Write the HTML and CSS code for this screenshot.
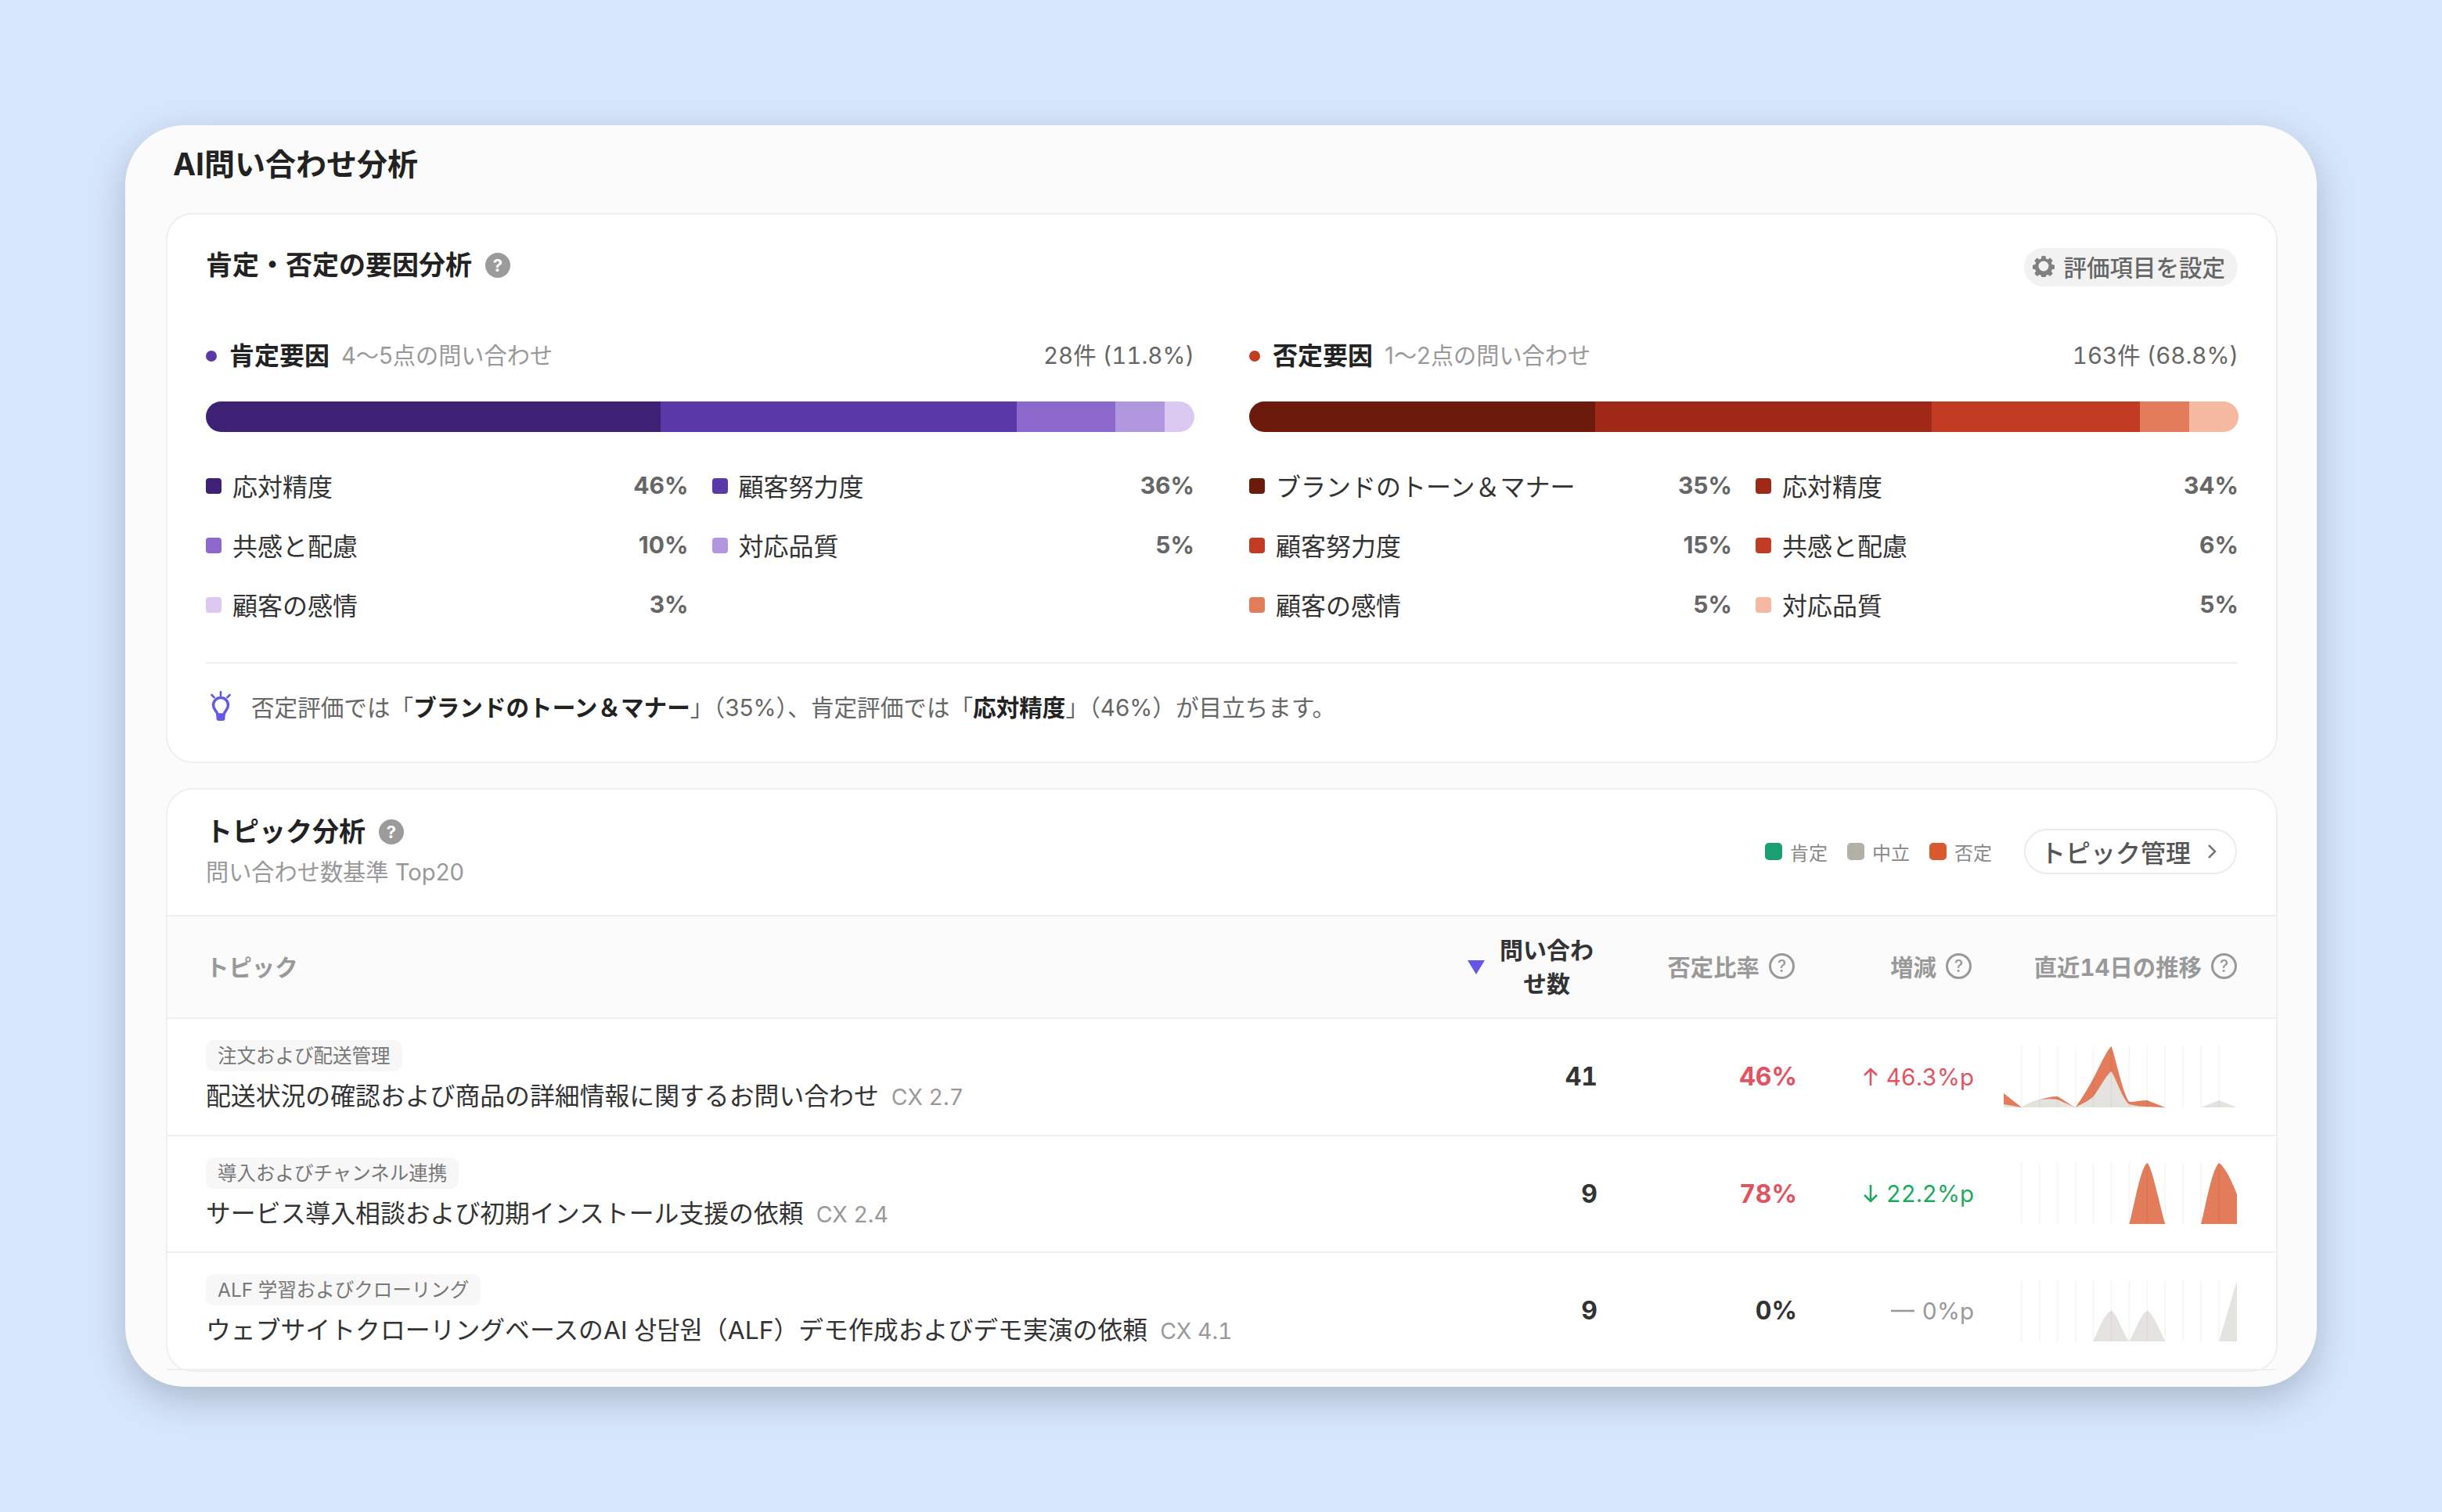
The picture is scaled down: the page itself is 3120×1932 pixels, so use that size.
FILE: index.html
```html
<!DOCTYPE html>
<html lang="ja">
<head>
<meta charset="utf-8">
<title>AI問い合わせ分析</title>
<link rel="stylesheet" href="styles.css">
</head>
<body>
<main class="window">
  <h1 class="page-title">AI問い合わせ分析</h1>

  <section class="card factors">
    <header class="card-head">
      <h2 class="card-title card-title-lift">肯定・否定の要因分析 <span class="help-solid">?</span></h2>
      <button class="settings">
        <svg class="gear" viewBox="0 0 28 28"><path fill-rule="evenodd" d="M11.600 1h4.800l.7 3.400 2.300 1 2.900-1.900 3.400 3.400-1.900 2.900 1 2.300 3.400.7v4.800l-3.400.7-1 2.300 1.900 2.900-3.400 3.400-2.900-1.900-2.300 1-.7 3.400h-4.800l-.7-3.400-2.300-1-2.900 1.900-3.400-3.400 1.900-2.900-1-2.300-3.400-.7v-4.800l3.400-.7 1-2.300-1.900-2.900 3.400-3.400 2.900 1.900 2.300-1zM14 7.500a6.500 6.500 0 1 0 0 13 6.500 6.500 0 0 0 0-13z"/></svg>
        評価項目を設定
      </button>
    </header>

    <div class="factor-cols">
      <div class="factor">
        <div class="factor-head">
          <span class="dot pos"></span><strong>肯定要因</strong><span class="muted">4〜5点の問い合わせ</span>
          <span class="count">28件 (11.8%)</span>
        </div>
        <div class="bar">
          <i class="p1" style="width:46%"></i><i class="p2" style="width:36%"></i><i class="p3" style="width:10%"></i><i class="p4" style="width:5%"></i><i class="p5" style="width:3%"></i>
        </div>
        <ul class="legend">
          <li><i class="p1"></i><span>応対精度</span><b>46%</b></li>
          <li><i class="p2"></i><span>顧客努力度</span><b>36%</b></li>
          <li><i class="p3"></i><span>共感と配慮</span><b>10%</b></li>
          <li><i class="p4"></i><span>対応品質</span><b>5%</b></li>
          <li><i class="p5"></i><span>顧客の感情</span><b>3%</b></li>
        </ul>
      </div>
      <div class="factor">
        <div class="factor-head">
          <span class="dot neg"></span><strong>否定要因</strong><span class="muted">1〜2点の問い合わせ</span>
          <span class="count">163件 (68.8%)</span>
        </div>
        <div class="bar">
          <i class="n1" style="width:35%"></i><i class="n2" style="width:34%"></i><i class="n3" style="width:15%"></i><i class="n3" style="width:6%"></i><i class="n4" style="width:5%"></i><i class="n5" style="width:5%"></i>
        </div>
        <ul class="legend">
          <li><i class="n1"></i><span>ブランドのトーン＆マナー</span><b>35%</b></li>
          <li><i class="n2"></i><span>応対精度</span><b>34%</b></li>
          <li><i class="n3"></i><span>顧客努力度</span><b>15%</b></li>
          <li><i class="n3"></i><span>共感と配慮</span><b>6%</b></li>
          <li><i class="n4"></i><span>顧客の感情</span><b>5%</b></li>
          <li><i class="n5"></i><span>対応品質</span><b>5%</b></li>
        </ul>
      </div>
    </div>

    <p class="note">
      <svg class="bulb" viewBox="0 0 28 38"><path class="bulb-ray" d="M14 1v5M2.500 5l3 3M25.500 5l-3 3"/><path class="bulb-line" d="M10 30c0-4-5.500-5.500-5.500-12a9.500 9.500 0 0 1 19 0c0 6.500-5.500 8-5.500 12z"/><path class="bulb-base" d="M8.500 29h11v6a3 3 0 0 1-3 3h-5a3 3 0 0 1-3-3z"/></svg>
      <span>否定評価では「<strong>ブランドのトーン＆マナー</strong>」（35%）、肯定評価では「<strong>応対精度</strong>」（46%）が目立ちます。</span>
    </p>
  </section>

  <section class="card topics">
    <header class="topics-head">
      <div class="topics-title">
        <h2 class="card-title">トピック分析 <span class="help-solid">?</span></h2>
        <p class="topics-sub">問い合わせ数基準 Top20</p>
      </div>
      <div class="topics-tools">
        <span class="key"><i class="k-pos"></i>肯定</span>
        <span class="key"><i class="k-neu"></i>中立</span>
        <span class="key"><i class="k-neg"></i>否定</span>
        <button class="manage">トピック管理
          <svg class="chev" viewBox="0 0 12 20"><path d="M2 2l8 8-8 8"/></svg>
        </button>
      </div>
    </header>

    <div class="row row-header">
      <div class="th-topic">トピック</div>
      <div class="th th-sort">
        <svg class="sort" viewBox="0 0 22 18"><path d="M0 0h22L11 18z"/></svg>
        <span>問い合わせ数</span>
      </div>
      <div class="th">否定比率 <span class="help-line">?</span></div>
      <div class="th">増減 <span class="help-line">?</span></div>
      <div class="th">直近14日の推移 <span class="help-line">?</span></div>
    </div>

    <div class="row">
      <div class="topic">
        <span class="tag">注文および配送管理</span>
        <p class="topic-name">配送状況の確認および商品の詳細情報に関するお問い合わせ<small>CX 2.7</small></p>
      </div>
      <div class="num">41</div>
      <div class="rate bad">46%</div>
      <div class="delta up"><svg viewBox="0 0 20 24"><path d="M10 23V2M2 10l8-8 8 8"/></svg>46.3%p</div>
      <div class="trend">
        <svg class="spark" viewBox="0 0 298 78">
          <path class="a-neg" d="M0 60L22.900 78C30 74 38 70 45.800 68C53 66 62 64 68.800 64C76 68 84 74 91.700 78C100 66 107 55 114.600 41C122 27 131 6 137.500 0C143 14 152 60 160.400 71C167 71 176 69 183.400 69L206.300 78H0Z"/>
          <path class="a-neu" d="M0 74L22.900 78C30 74 38 69 45.800 68C53 67 62 67 68.800 68C76 71 84 75 91.700 78C100 73 107 71 114.600 64C122 55 131 36 137.500 32C143 40 152 68 160.400 74C167 76 176 77 183.400 77L206.300 78H0ZM252.100 78L275.100 69L298 78Z"/>
          <path class="grid" d="M22.900 0V78M45.800 0V78M68.800 0V78M91.700 0V78M114.600 0V78M137.500 0V78M160.400 0V78M183.400 0V78M206.300 0V78M229.200 0V78M252.100 0V78M275.100 0V78"/>
        </svg>
      </div>
    </div>

    <div class="row">
      <div class="topic">
        <span class="tag">導入およびチャンネル連携</span>
        <p class="topic-name">サービス導入相談および初期インストール支援の依頼<small>CX 2.4</small></p>
      </div>
      <div class="num">9</div>
      <div class="rate bad">78%</div>
      <div class="delta down"><svg viewBox="0 0 20 24"><path d="M10 1v21M2 14l8 8 8-8"/></svg>22.2%p</div>
      <div class="trend">
        <svg class="spark" viewBox="0 0 298 78">
          <path class="a-neg" d="M160.400 78C166 58 175 5 183.400 0C190 5 200 58 206.300 78ZM252.100 78C258 55 266 8 275.100 0C282 4 291 22 298 40V78Z"/>
          <path class="grid" d="M22.900 0V78M45.800 0V78M68.800 0V78M91.700 0V78M114.600 0V78M137.500 0V78M160.400 0V78M183.400 0V78M206.300 0V78M229.200 0V78M252.100 0V78M275.100 0V78"/>
        </svg>
      </div>
    </div>

    <div class="row">
      <div class="topic">
        <span class="tag">ALF 学習およびクローリング</span>
        <p class="topic-name">ウェブサイトクローリングベースのAI 상담원（ALF）デモ作成およびデモ実演の依頼<small>CX 4.1</small></p>
      </div>
      <div class="num">9</div>
      <div class="rate">0%</div>
      <div class="delta flat"><svg viewBox="0 0 30 24"><path d="M0 12h30"/></svg>0%p</div>
      <div class="trend">
        <svg class="spark" viewBox="0 0 298 78">
          <path class="a-neu" d="M114.600 78C120 65 130 40 137.500 39C144 40 153 70 160.400 78C166 70 176 40 183.400 39C190 40 200 65 206.300 78ZM275.100 78L298 0V78Z"/>
          <path class="grid" d="M22.900 0V78M45.800 0V78M68.800 0V78M91.700 0V78M114.600 0V78M137.500 0V78M160.400 0V78M183.400 0V78M206.300 0V78M229.200 0V78M252.100 0V78M275.100 0V78"/>
        </svg>
      </div>
    </div>
  </section>
</main>
</body>
</html>
```
FILE: styles.css
```css
* { box-sizing: border-box; }
html, body { margin: 0; padding: 0; }
body {
  width: 3120px;
  height: 1932px;
  padding: 160px;
  background: #d6e6fd;
  font-family: Inter, "Noto Sans CJK JP", sans-serif;
  color: #222;
  overflow: hidden;
}
h1, h2, p, ul { margin: 0; padding: 0; }
ul { list-style: none; }
button { font-family: inherit; cursor: pointer; }

.window {
  width: 2800px;
  height: 1612px;
  padding: 22px 50px 0 52px;
  background: #fbfbfb;
  border-radius: 76px;
  box-shadow: 0 16px 48px rgba(0, 0, 0, .2);
  overflow: hidden;
}
.page-title {
  font-size: 39px;
  line-height: 56px;
  font-weight: 700;
  margin: 0 0 34px 9px;
  color: #222;
}
.card {
  background: #fff;
  border: 2px solid #efefef;
  border-radius: 34px;
}
.factors { padding: 43px 49px 51px; margin-bottom: 32px; }
.card-head { display: flex; justify-content: space-between; align-items: center; height: 49px; }
.card-title {
  display: flex;
  align-items: center;
  gap: 17px;
  font-size: 34px;
  line-height: 44px;
  font-weight: 700;
  color: #222;
}
.card-title-lift { margin-bottom: 5px; }
.help-solid {
  display: inline-flex;
  justify-content: center;
  align-items: center;
  width: 32px;
  height: 32px;
  border-radius: 50%;
  background: #9b9b9b;
  color: #fff;
  font-size: 22px;
  font-weight: 700;
}
.settings {
  display: flex;
  align-items: center;
  gap: 11px;
  height: 49px;
  padding: 0 16px 3px 11px;
  border: 0;
  border-radius: 25px;
  background: #f2f2f2;
  color: #666;
  font-size: 29.500px;
  font-weight: 500;
}
.gear { width: 28px; height: 28px; fill: #808080; }

.factor-cols { display: grid; grid-template-columns: 1263px 1264px; gap: 70px; margin-top: 64px; }
.factor-head { display: flex; align-items: center; height: 44px; font-size: 29.200px; }
.factor-head strong { font-size: 32px; font-weight: 700; margin-right: 15px; color: #222; }
.dot { width: 14px; height: 14px; border-radius: 50%; margin: 6px 16px 0 0; }
.dot.pos { background: #5b38a8; }
.dot.neg { background: #c23c24; }
.muted { color: #999; }
.count { margin-left: auto; color: #666; font-size: 29.500px; font-variant-numeric: tabular-nums; }

.bar { display: flex; height: 39px; margin-top: 39px; border-radius: 20px; overflow: hidden; }
.bar i { display: block; height: 100%; }
.p1 { background: #3e2174; }
.p2 { background: #5b38a8; }
.p3 { background: #8c68cc; }
.p4 { background: #b197de; }
.p5 { background: #dcc9f2; }
.n1 { background: #6b1a0c; }
.n2 { background: #a02816; }
.n3 { background: #c23c24; }
.n4 { background: #e27c5a; }
.n5 { background: #f5b8a0; }

.legend { display: grid; grid-template-columns: 1fr 1fr; gap: 32px 30px; margin-top: 46px; }
.legend li { display: flex; align-items: center; height: 44px; font-size: 32px; color: #333; }
.legend i { width: 20px; height: 20px; border-radius: 4px; margin: 2px 14px 0 0; }
.legend b { margin-left: auto; font-size: 30px; font-weight: 700; color: #666; }

.note {
  display: flex;
  align-items: center;
  gap: 25px;
  height: 40px;
  margin-top: 52px;
  padding: 34px 0 0 5px;
  box-sizing: content-box;
  border-top: 2px solid #efefef;
  font-size: 29.600px;
  color: #666;
}
.note strong { font-weight: 700; color: #222; }
.bulb { width: 28px; height: 38px; flex: none; }
.bulb-ray { fill: none; stroke: #6259e8; stroke-width: 2.600; stroke-linecap: round; }
.bulb-line { fill: none; stroke: #6259e8; stroke-width: 3.500; }
.bulb-base { fill: #6259e8; }

.topics-head {
  display: flex;
  justify-content: space-between;
  align-items: center;
  height: 160px;
  padding: 0 50px 2px 49px;
}
.topics-sub { margin-top: 10px; font-size: 29.200px; line-height: 40px; color: #999; }
.topics-tools { display: flex; align-items: center; }
.key { display: flex; align-items: center; gap: 10px; margin-right: 25px; font-size: 24px; color: #888; }
.key i { width: 22px; height: 22px; border-radius: 5px; }
.k-pos { background: #1a9e74; }
.k-neu { background: #b3b0a6; }
.k-neg { background: #d9582e; }
.manage {
  display: flex;
  align-items: center;
  justify-content: space-between;
  width: 272px;
  height: 58px;
  margin-left: 16px;
  padding: 0 24px 0 19px;
  border: 2px solid #ececec;
  border-radius: 29px;
  background: #fff;
  color: #555;
  font-size: 32px;
  font-weight: 500;
}
.chev { width: 12px; height: 20px; fill: none; stroke: #777; stroke-width: 2.500; }

.row {
  display: grid;
  grid-template-columns: 1fr 168px 255px 226px 336px;
  align-items: center;
  height: 149.500px;
  padding: 0 50px 0 49px;
  border-bottom: 2px solid #efefef;
  font-variant-numeric: tabular-nums;
}
.row-header {
  height: 133px;
  padding-bottom: 3px;
  background: #fbfbfb;
  border-top: 2px solid #efefef;
}
.th-topic, .th {
  font-size: 29.400px;
  font-weight: 700;
  color: #999;
}
.th {
  display: flex;
  justify-content: flex-end;
  align-items: center;
  gap: 12px;
  white-space: nowrap;
}
.th-sort { gap: 14px; margin-top: 3px; color: #333; font-size: 30px; }
.th-sort span { width: 130px; line-height: 43px; text-align: center; white-space: normal; }
.sort { width: 22px; height: 18px; fill: #6457e8; }
.help-line {
  display: inline-flex;
  justify-content: center;
  align-items: center;
  width: 33px;
  height: 33px;
  margin-right: 3px;
  border: 3px solid #999;
  border-radius: 50%;
  font-size: 21px;
  font-weight: 500;
  color: #999;
}
.row-header .th:last-child { margin-right: -3px; }

.topic { display: flex; flex-direction: column; align-items: flex-start; gap: 12px; }
.tag {
  height: 40px;
  padding: 0 15px;
  border-radius: 10px;
  background: #f7f7f7;
  color: #777;
  font-size: 24.500px;
  line-height: 40px;
}
.topic-name { font-size: 31.850px; line-height: 40px; color: #333; white-space: nowrap; }
.topic-name small { margin-left: 16px; font-size: 28.500px; color: #999; }
.num, .rate { text-align: right; font-size: 32px; font-weight: 700; color: #333; }
.bad { color: #e35260; }
.delta {
  display: flex;
  justify-content: flex-end;
  align-items: center;
  gap: 10px;
  font-size: 29.500px;
}
.delta svg { width: 20px; height: 24px; fill: none; stroke: currentColor; stroke-width: 2.600; flex: none; }
.delta.flat svg { width: 30px; }
.up { color: #e35260; }
.down { color: #1fa85f; }
.flat { color: #999; }
.trend { display: flex; justify-content: flex-end; }
.spark { width: 298px; height: 78px; }
.a-neg { fill: #e27c5a; }
.a-neu { fill: #e4e3df; }
.grid { fill: none; stroke: rgba(0, 0, 0, .045); stroke-width: 1.500; }
```
